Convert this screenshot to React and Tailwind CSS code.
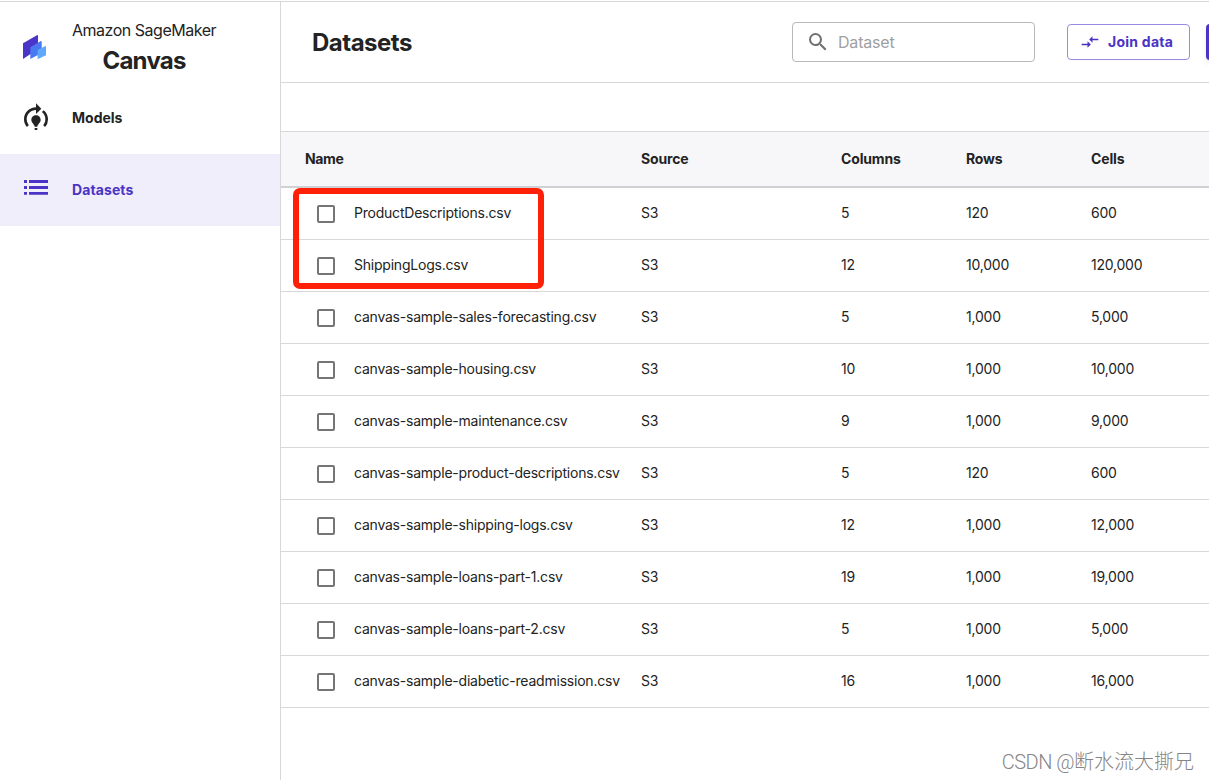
import { MdCompareArrows, MdModelTraining, MdSearch } from 'react-icons/md';

const datasets = [
  { name: 'ProductDescriptions.csv', source: 'S3', columns: '5', rows: '120', cells: '600' },
  { name: 'ShippingLogs.csv', source: 'S3', columns: '12', rows: '10,000', cells: '120,000' },
  { name: 'canvas-sample-sales-forecasting.csv', source: 'S3', columns: '5', rows: '1,000', cells: '5,000' },
  { name: 'canvas-sample-housing.csv', source: 'S3', columns: '10', rows: '1,000', cells: '10,000' },
  { name: 'canvas-sample-maintenance.csv', source: 'S3', columns: '9', rows: '1,000', cells: '9,000' },
  { name: 'canvas-sample-product-descriptions.csv', source: 'S3', columns: '5', rows: '120', cells: '600' },
  { name: 'canvas-sample-shipping-logs.csv', source: 'S3', columns: '12', rows: '1,000', cells: '12,000' },
  { name: 'canvas-sample-loans-part-1.csv', source: 'S3', columns: '19', rows: '1,000', cells: '19,000' },
  { name: 'canvas-sample-loans-part-2.csv', source: 'S3', columns: '5', rows: '1,000', cells: '5,000' },
  { name: 'canvas-sample-diabetic-readmission.csv', source: 'S3', columns: '16', rows: '1,000', cells: '16,000' },
];

const Logo = () => (
  <svg className="h-[26px] w-6" viewBox="0 0 24 26">
    <path d="M0 10.2 13.5 2.4Q15 1.6 15 3v13L0 26z" fill="#4a35c8" />
    <path d="M7.3 14.2 17.4 8.2Q18.7 7.6 18.7 9v11L7.3 26z" fill="#4a78f0" />
    <path d="M14.6 17 21.8 13.2Q23 12.8 23 14v8.2l-8.4 4z" fill="#60a8fb" />
  </svg>
);

const ListIcon = () => (
  <svg className="h-[15px] w-6" viewBox="0 0 24 15" fill="currentColor">
    <path d="M0 0h3v3H0zM5 0h19v3H5zM0 6h3v3H0zM5 6h19v3H5zM0 12h3v2.7H0zM5 12h19v2.7H5z" />
  </svg>
);

const Sidebar = () => (
  <aside className="w-[281px] shrink-0 border-r border-[#d8d8da]">
    <div className="flex h-20">
      <div className="pl-[23px] pt-[31px]">
        <Logo />
      </div>
      <div className="ml-[25px] mt-[17px] text-center">
        <div className="text-base leading-[22px] tracking-[-0.48px]">Amazon SageMaker</div>
        <div className="mt-[5px] text-2xl font-bold leading-[30px] tracking-[-0.75px]">Canvas</div>
      </div>
    </div>
    <nav className="text-sm font-bold">
      <a className="flex h-18 items-center pl-5">
        <MdModelTraining className="size-8" />
        <span className="ml-5">Models</span>
      </a>
      <a className="flex h-18 items-center bg-[#f0eefb] pl-6 text-[#4a33c5]">
        <span className="-mt-[5px]">
          <ListIcon />
        </span>
        <span className="ml-6 tracking-[0.1px]">Datasets</span>
      </a>
    </nav>
  </aside>
);

const Header = () => (
  <header className="flex h-[81px] items-center border-b border-[#d8d8da]">
    <h1 className="ml-[31px] mt-0.5 w-[480px] shrink-0 text-2xl font-bold tracking-[-0.5px]">Datasets</h1>
    <div className="flex h-10 w-[243px] shrink-0 items-center rounded border border-[#b9b9b9] pl-[13px]">
      <MdSearch className="size-6 text-[#707070]" />
      <span className="ml-2 text-base tracking-[-0.2px] text-[#a0a0a0]">Dataset</span>
    </div>
    <button className="ml-8 flex h-9 w-[123px] shrink-0 items-center rounded border border-[#9b8be0] pl-3 text-sm font-bold text-[#4a33c5]">
      <MdCompareArrows className="size-5" />
      <span className="ml-2 tracking-[0.25px]">Join data</span>
    </button>
    <button className="ml-4 h-9 w-24 shrink-0 rounded bg-[#4a33c5] shadow-md" />
  </header>
);

const App = () => {
  return (
    <div className="relative mt-px flex h-[779px] w-[1209px] overflow-hidden border-t border-[#d8d8da] bg-white font-['Inter','Noto_Sans_CJK_SC',sans-serif] text-[#232323]">
      <Sidebar />
      <main className="w-[928px] shrink-0 overflow-hidden">
        <Header />
        <div className="h-12" />
        <div className="flex h-[57px] items-center border-t border-b-2 border-t-[#d8d8da] border-b-[#d0d1d4] bg-[#f7f7fa] pl-6 text-sm font-bold tracking-[-0.15px]">
          <span className="w-[336px] tracking-[-0.4px]">Name</span>
          <span className="w-[200px]">Source</span>
          <span className="w-[125px]">Columns</span>
          <span className="w-[125px]">Rows</span>
          <span>Cells</span>
        </div>
        {datasets.map((dataset) => (
          <div key={dataset.name} className="flex h-13 items-center border-b border-[#d8d8da] pb-0.5 text-sm tracking-[-0.22px]">
            <span className="ml-9 mt-[3px] size-[18px] rounded-[2px] border-2 border-[#757575]" />
            <span className="ml-[19px] w-[287px] whitespace-nowrap">{dataset.name}</span>
            <span className="w-[200px]">{dataset.source}</span>
            <span className="w-[125px]">{dataset.columns}</span>
            <span className="w-[125px]">{dataset.rows}</span>
            <span>{dataset.cells}</span>
          </div>
        ))}
      </main>
      {/* highlight around the two uploaded files */}
      <div className="absolute left-[293px] top-[186px] h-[101px] w-[251px] rounded-[7px] border-6 border-[#ff2008]" />
      <div className="absolute bottom-[3px] right-[15px] whitespace-nowrap font-['Roboto','Noto_Sans_CJK_SC',sans-serif] text-xl font-light leading-[30px] text-[#858585]">
        <span className="tracking-[-0.5px]">CSDN @</span>断水流大撕兄
      </div>
    </div>
  );
};

export default App;
